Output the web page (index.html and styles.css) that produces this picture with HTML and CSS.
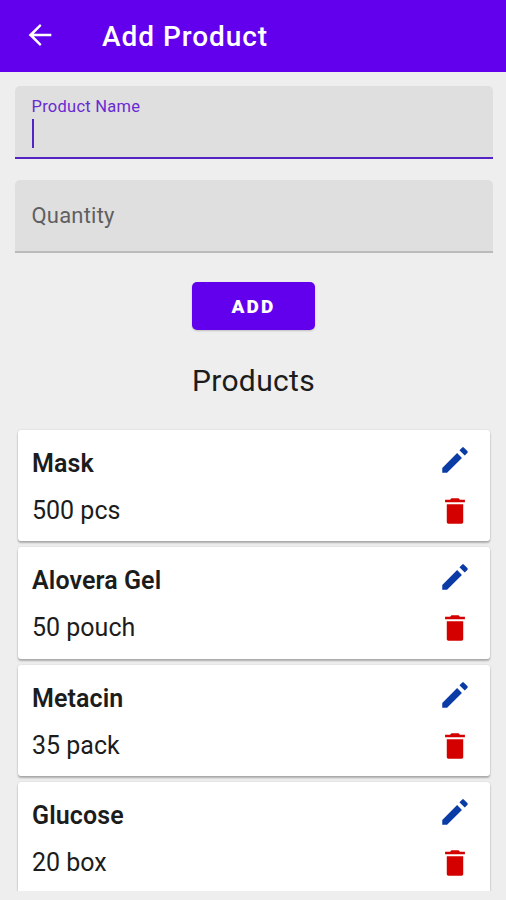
FILE: index.html
```html
<!DOCTYPE html>
<html lang="en">
<head>
<meta charset="utf-8">
<title>Add Product</title>
<link rel="stylesheet" href="styles.css">
</head>
<body>
<svg class="sprite" aria-hidden="true">
  <symbol id="edit" viewBox="0 0 24 24"><path d="M3 17.6V21h3.4L16.9 10.5l-3.4-3.4L3 17.6zM20.71 7.04c.39-.39.39-1.02 0-1.41l-2.34-2.34c-.39-.39-1.02-.39-1.41 0l-1.83 1.83 3.75 3.75 1.83-1.83z"/></symbol>
  <symbol id="delete" viewBox="0 0 24 24"><path d="M6.2 19.8c0 .7.5 1.2 1.2 1.2h9.2c.7 0 1.2-.5 1.2-1.2V7.2H6.2v12.6zM19 4h-3.5l-1-1h-5l-1 1H5v1.9h14V4z"/></symbol>
</svg>
<header class="bar">
  <svg class="back" viewBox="0 0 24 24"><path d="M20 11.2H7.6l5.5-5.8L12 4.2l-8 7.8 8 7.8 1.1-1.2-5.5-5.8H20v-1.6z"/></svg>
  <h1 class="title"><span>Add Product</span></h1>
</header>
<main class="content">
  <div class="field focused"><span class="label">Product Name</span><span class="caret"></span></div>
  <div class="field"><span class="hint">Quantity</span></div>
  <button class="add" type="button"><span>ADD</span></button>
  <h2 class="heading"><span>Products</span></h2>
  <div class="list">
    <article class="card">
      <div class="text"><span class="name">Mask</span><span class="qty">500 pcs</span></div>
      <div class="actions"><svg class="edit"><use href="#edit"/></svg><svg class="delete"><use href="#delete"/></svg></div>
    </article>
    <article class="card">
      <div class="text"><span class="name">Alovera Gel</span><span class="qty">50 pouch</span></div>
      <div class="actions"><svg class="edit"><use href="#edit"/></svg><svg class="delete"><use href="#delete"/></svg></div>
    </article>
    <article class="card">
      <div class="text"><span class="name">Metacin</span><span class="qty">35 pack</span></div>
      <div class="actions"><svg class="edit"><use href="#edit"/></svg><svg class="delete"><use href="#delete"/></svg></div>
    </article>
    <article class="card">
      <div class="text"><span class="name">Glucose</span><span class="qty">20 box</span></div>
      <div class="actions"><svg class="edit"><use href="#edit"/></svg><svg class="delete"><use href="#delete"/></svg></div>
    </article>
  </div>
</main>
</body>
</html>
```
FILE: styles.css
```css
* { box-sizing: border-box; }
body {
  margin: 0;
  height: 900px;
  overflow: hidden;
  background: #eee;
  color: #1c1c1c;
  font-family: Roboto, sans-serif;
}
svg { display: block; fill: currentColor; }
.sprite { position: absolute; width: 0; height: 0; }
.bar {
  display: flex;
  align-items: center;
  height: 72px;
  padding-left: 23px;
  background: #6200ee;
  color: #fff;
}
.back { width: 34px; height: 34px; margin-top: -3px; }
.title { margin: 2px 0 0 45px; font-size: 28px; line-height: 34px; font-weight: 500; letter-spacing: .95px; }
.content { display: flex; flex-direction: column; padding: 14px 13px 0 15px; }
.field {
  display: flex;
  flex-direction: column;
  height: 73px;
  padding: 11px 17px 0;
  background: #dfdfdf;
  border-bottom: 2px solid #bbb;
  border-radius: 5px 5px 0 0;
}
.field.focused { margin-bottom: 21px; border-color: #5323c4; }
.label { margin-left: -.5px; font-size: 16.5px; line-height: 20px; letter-spacing: .25px; color: #6a2ad2; }
.caret { width: 2px; height: 29px; margin-top: 2px; background: #5323c4; }
.hint { margin: 11px 0 0 -.5px; font-size: 22px; line-height: 27px; letter-spacing: .2px; color: #5f5f5f; }
.add {
  align-self: center;
  width: 123px;
  height: 48px;
  margin: 29px 0 0 -1px;
  padding: 2px 0 0;
  border: 0;
  border-radius: 5px;
  background: #6200ee;
  color: #fff;
  font: 900 19px/24px Roboto, sans-serif;
  letter-spacing: 2.2px;
  box-shadow: 0 1px 2px #0003;
}
.heading { margin: 33px 0 0 -1px; font-size: 30px; line-height: 36px; font-weight: 400; letter-spacing: .35px; text-align: center; }
.list { height: 464px; margin: 28px -7px 0 -7px; padding: 3px 10px 0; overflow: hidden; }
.card {
  display: flex;
  justify-content: space-between;
  height: 111.3px;
  margin-bottom: 6px;
  padding: 13px 18px 0 14px;
  background: #fff;
  border-radius: 3px;
  box-shadow: 0 2px 2px #0004, 0 0 2px #0002;
}
.text { display: flex; flex-direction: column; gap: 13px; padding-top: 4px; }
.name, .qty { font-size: 25px; line-height: 34px; }
.name { font-weight: 600; letter-spacing: .1px; }
.actions { display: flex; flex-direction: column; gap: 17px; }
.actions svg { width: 34px; height: 34px; }
.edit { color: #0b3ca6; }
.delete { color: #d40000; }
```
